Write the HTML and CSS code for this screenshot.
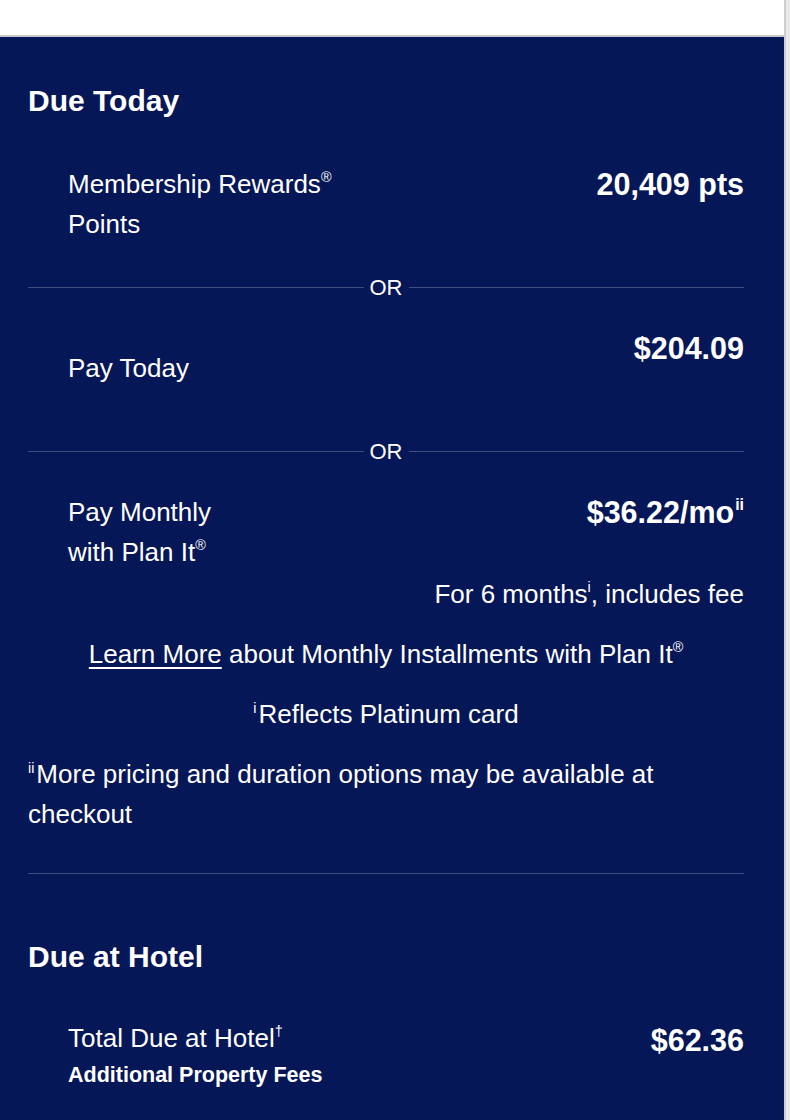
FILE: index.html
```html
<!DOCTYPE html>
<html lang="en">
<head>
<meta charset="utf-8">
<title>Due Today</title>
<link rel="stylesheet" href="styles.css">
</head>
<body>
<div class="frame">
  <div class="main">
    <div class="topbar"></div>
    <section class="panel">
      <h2 class="heading">Due Today</h2>

      <div class="row">
        <div class="label">Membership Rewards<sup>®</sup><br>Points</div>
        <div class="value">20,409 pts</div>
      </div>

      <div class="or"><span class="rule"></span><span class="or-text">OR</span><span class="rule"></span></div>

      <div class="row row-centered">
        <div class="label">Pay Today</div>
        <div class="value">$204.09</div>
      </div>

      <div class="or"><span class="rule"></span><span class="or-text">OR</span><span class="rule"></span></div>

      <div class="row">
        <div class="label">Pay Monthly<br>with Plan It<sup>®</sup></div>
        <div class="value">$36.22/mo<sup class="vsup">ii</sup></div>
      </div>

      <p class="note note-right">For 6 months<sup>i</sup>, includes fee</p>
      <p class="note note-center"><a class="link" href="#">Learn More</a> about Monthly Installments with Plan It<sup>®</sup></p>
      <p class="note note-center"><sup class="lead">i</sup>Reflects Platinum card</p>
      <p class="note"><sup class="lead">ii</sup>More pricing and duration options may be available at checkout</p>

      <hr class="divider">

      <h2 class="heading heading-hotel">Due at Hotel</h2>

      <div class="row row-hotel">
        <div class="label">Total Due at Hotel<sup>†</sup>
          <div class="sublabel">Additional Property Fees</div>
        </div>
        <div class="value">$62.36</div>
      </div>
    </section>
  </div>
  <div class="edge"></div>
</div>
</body>
</html>
```

FILE: styles.css
```css
html, body {
  margin: 0;
  padding: 0;
  background: #ffffff;
}

body {
  font-family: "Liberation Sans", Arial, Helvetica, sans-serif;
  color: #ffffff;
}

.frame {
  display: flex;
  width: 790px;
  height: 1120px;
  overflow: hidden;
}

.main {
  width: 784px;
  display: flex;
  flex-direction: column;
}

.edge {
  width: 4px;
  border-left: 2px solid #cfcfcf;
  background: #e8e8e8;
}

.topbar {
  height: 35px;
  background: #ffffff;
  border-bottom: 2px solid #c9c9c9;
}

.panel {
  flex: 1;
  background: #061757;
  padding: 46px 40px 0 28px;
}

.heading {
  margin: 0;
  font-size: 30px;
  line-height: 36px;
  font-weight: bold;
}

.row {
  display: flex;
  justify-content: space-between;
  align-items: flex-start;
  padding-left: 40px;
  margin-top: 45px;
}

.label {
  font-size: 26px;
  line-height: 40px;
}

.value {
  font-size: 30.5px;
  line-height: 40px;
  font-weight: bold;
  white-space: nowrap;
}

sup {
  font-size: 0.55em;
  line-height: 0;
  vertical-align: 0.75em;
}

sup.lead {
  display: inline-block;
  line-height: 14px;
  vertical-align: top;
  margin-top: 7px;
  margin-right: 2px;
}

.vsup {
  font-size: 0.52em;
  vertical-align: 0.85em;
  font-weight: bold;
  margin-left: 1px;
}

.row-centered {
  height: 80px;
}

.row-centered .label {
  align-self: center;
}

.or {
  display: flex;
  align-items: center;
  gap: 6px;
  margin-top: 30px;
  height: 26px;
}

.or + .row {
  margin-top: 28px;
}

.rule {
  flex: 1;
  height: 1px;
  background: #414c7e;
}

.or-text {
  font-size: 22px;
  line-height: 26px;
  padding-top: 2px;
}

.note {
  margin: 20px 0 0;
  font-size: 26px;
  line-height: 40px;
}

.note-right {
  text-align: right;
  margin-top: 2px;
}

.note-center {
  text-align: center;
}

.link {
  color: #ffffff;
  text-decoration: underline;
  text-underline-offset: 4px;
  text-decoration-thickness: 2px;
}

.divider {
  border: 0;
  height: 1px;
  background: #414c7e;
  margin: 39px 0 0;
}

.heading-hotel {
  margin-top: 65px;
}

.row-hotel {
  margin-top: 43px;
}

.sublabel {
  font-size: 21.5px;
  line-height: 30px;
  font-weight: bold;
  margin-top: 2px;
}

.row-hotel .value {
  margin-top: 2px;
}
```
